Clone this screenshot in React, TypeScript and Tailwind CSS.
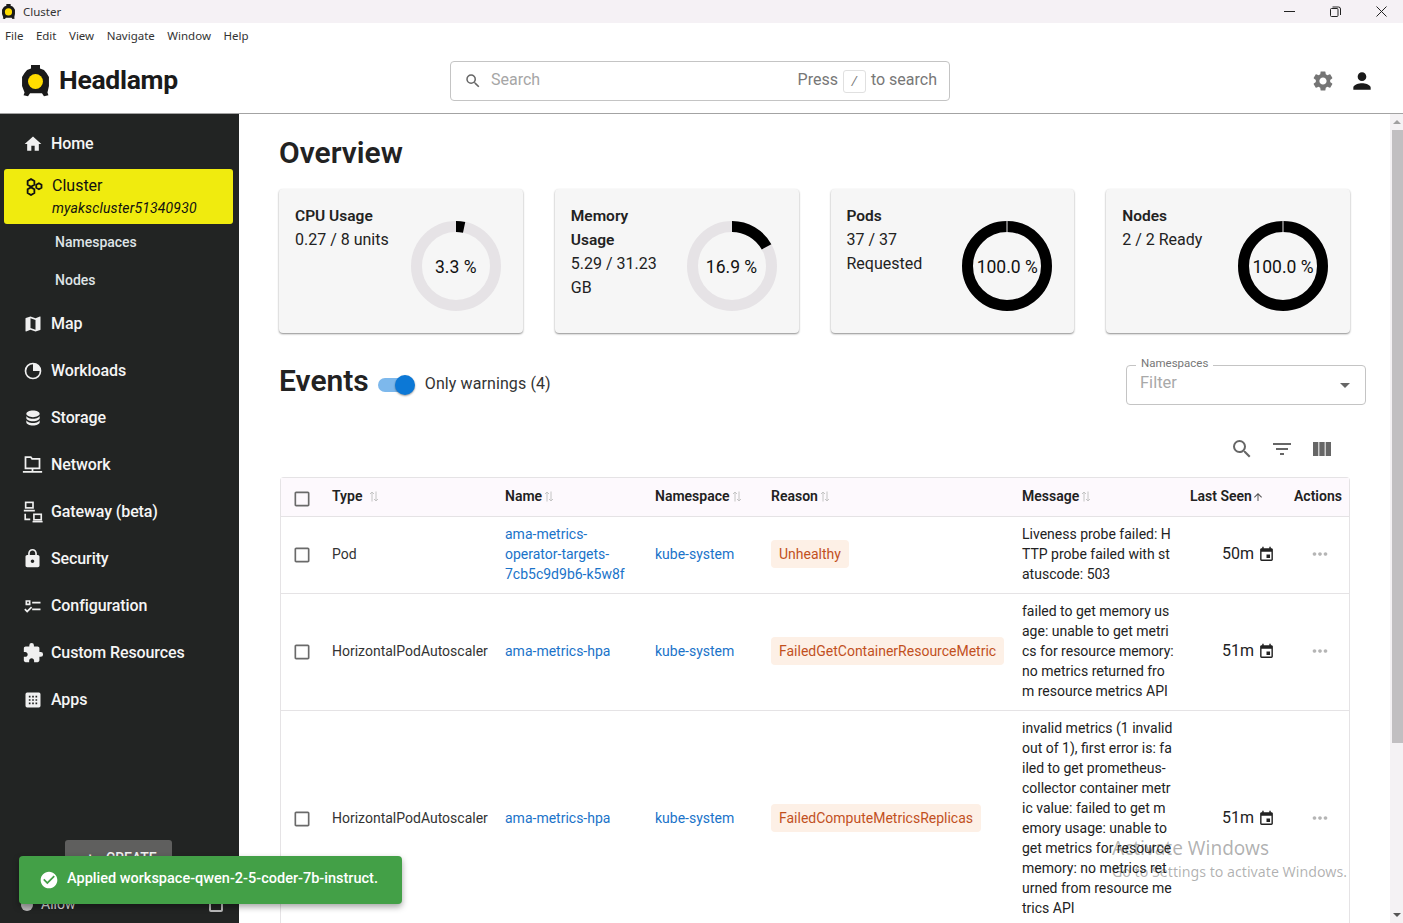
import {
  MdArrowUpward,
  MdCheckBoxOutlineBlank,
  MdCheckCircle,
  MdEvent,
  MdExtension,
  MdFilterList,
  MdHome,
  MdLock,
  MdMap,
  MdMoreHoriz,
  MdPerson,
  MdSearch,
  MdSettings,
  MdViewColumn,
} from "react-icons/md";
import { ReactNode } from "react";

const FONT = "font-['Roboto','Noto_Sans',sans-serif]";

const Logo = ({ size }: { size: number }) => (
  <svg width={size} height={size * 1.18} viewBox="0 0 27 32">
    <path
      d="M9 0h9v3.500l4 1.500 2.500 3L27 12v9l-1.500 6.500 1 3-4.500 1-2-3H8l-2 3-4.500-1 1-3L0 21v-9l2.500-4L5 5l4-1.500z"
      fill="#1a1a1a"
    />
    <circle cx="13.5" cy="16.5" r="7.5" fill="#ffdc00" />
  </svg>
);

const WorkloadsIcon = () => (
  <svg width="20" height="20" viewBox="0 0 24 24" fill="#f0f0f0">
    <path d="M12 2A10 10 0 1 0 22 12 10 10 0 0 0 12 2m0 18a8 8 0 1 1 0-16v8h8a8 8 0 0 1-8 8" />
  </svg>
);

const StorageIcon = () => (
  <svg width="20" height="20" viewBox="0 0 24 24" fill="#f0f0f0">
    <path d="M12 3C7.58 3 4 4.790 4 7s3.580 4 8 4 8-1.790 8-4-3.580-4-8-4M4 9v3c0 2.210 3.580 4 8 4s8-1.790 8-4V9c0 2.210-3.580 4-8 4s-8-1.790-8-4m0 5v3c0 2.210 3.580 4 8 4s8-1.790 8-4v-3c0 2.210-3.580 4-8 4s-8-1.790-8-4" />
  </svg>
);

const NetworkIcon = () => (
  <svg width="21" height="21" viewBox="0 0 24 24" fill="none" stroke="#f0f0f0" strokeWidth="2">
    <path d="M4 3.500h6l1.500 2H20v11H4z" />
    <path d="M12 16.500v4M1 20.500h22" />
  </svg>
);

const GatewayIcon = () => (
  <svg width="22" height="22" viewBox="0 0 24 24" fill="none" stroke="#f0f0f0" strokeWidth="1.800">
    <rect x="4" y="1.500" width="8" height="6" />
    <path d="M2 10.500h12M3.500 14v6H9" />
    <rect x="13" y="14.500" width="8" height="6" />
    <path d="M11.500 22.500h11" />
  </svg>
);

const ConfigIcon = () => (
  <svg width="20" height="20" viewBox="0 0 24 24" fill="#f0f0f0">
    <path d="M3 5h6v6H3zm2 2v2h2V7zm6 0h10v2H11zm0 8h10v2H11zm-6 5-3.500-3.500 1.410-1.410L5 17.170l4.590-4.580L11 14z" />
  </svg>
);

const AppsIcon = () => (
  <svg width="20" height="20" viewBox="0 0 24 24" fill="#f0f0f0">
    <path d="M5 3h14a2 2 0 0 1 2 2v14a2 2 0 0 1-2 2H5a2 2 0 0 1-2-2V5a2 2 0 0 1 2-2m2 4v2h2V7zm4 0v2h2V7zm4 0v2h2V7zm-8 4v2h2v-2zm4 0v2h2v-2zm4 0v2h2v-2zm-8 4v2h2v-2zm4 0v2h2v-2zm4 0v2h2v-2z" />
  </svg>
);

const ClusterIcon = () => (
  <svg width="18" height="18" viewBox="0 0 24 24" fill="none" stroke="#111" strokeWidth="2.400">
    <path d="M8 1.500l4.500 2.600v5L8 11.700 3.500 9.100v-5z" />
    <path d="M8 12.500l4.500 2.600v5L8 22.700l-4.500-2.600v-5z" />
    <path d="M18.500 7l3.500 2v4l-3.500 2-3.500-2V9z" />
  </svg>
);

const NavItem = ({ icon, label }: { icon: ReactNode; label: string }) => (
  <div className="flex h-[47px] items-center text-[16px] font-medium text-[#f5f5f5]">
    <div className="flex w-[51px] shrink-0 justify-center pl-[16px] pr-[2px]">{icon}</div>
    <span className="tracking-[-0.1px]">{label}</span>
  </div>
);

const SubItem = ({ label }: { label: string }) => (
  <div className="flex h-[38px] items-center pb-[2px] pl-[55px] text-[14px] font-medium text-[#dfe3e6]">
    {label}
  </div>
);

const Sidebar = () => (
  <aside className="flex w-[239px] shrink-0 flex-col bg-[#222423] pt-[6px]">
    <NavItem icon={<MdHome size={20} color="#f0f0f0" />} label="Home" />
    <div className="mt-[2px] mr-[6px] ml-[4px] flex h-[55px] rounded-[3px] bg-[#f0eb0e] text-[#111]">
      <div className="flex w-[43px] shrink-0 justify-end pt-[9px] pr-[4px]">
        <ClusterIcon />
      </div>
      <div className="pl-[5px]">
        <div className="mt-[6px] text-[16px] leading-[22px]">Cluster</div>
        <div className="text-[14px] leading-[22px] tracking-[0.15px] italic">myakscluster51340930</div>
      </div>
    </div>
    <SubItem label="Namespaces" />
    <SubItem label="Nodes" />
    <NavItem icon={<MdMap size={20} color="#f0f0f0" />} label="Map" />
    <NavItem icon={<WorkloadsIcon />} label="Workloads" />
    <NavItem icon={<StorageIcon />} label="Storage" />
    <NavItem icon={<NetworkIcon />} label="Network" />
    <NavItem icon={<GatewayIcon />} label="Gateway (beta)" />
    <NavItem icon={<MdLock size={21} color="#f0f0f0" />} label="Security" />
    <NavItem icon={<ConfigIcon />} label="Configuration" />
    <NavItem icon={<MdExtension size={22} color="#f0f0f0" />} label="Custom Resources" />
    <NavItem icon={<AppsIcon />} label="Apps" />
    <div className="mt-auto ml-[65px] flex h-[36px] w-[107px] items-center justify-center gap-[12px] rounded-[3px] bg-[#5f5f5e] pl-[6px] text-[14px] font-medium text-[#f0f0f0]">
      <span>+</span>
      <span>CREATE</span>
    </div>
    <div className="flex h-[47px] items-center pt-[10px] pr-[16px] pl-[21px] text-[14px] text-[#ddd]">
      <span className="h-[12px] w-[12px] rounded-full bg-[#bbb]" />
      <span className="ml-[8px]">Allow</span>
      <span className="ml-auto h-[14px] w-[14px] rounded-[2px] border-2 border-[#bbb]" />
    </div>
  </aside>
);

const Donut = ({ pct }: { pct: number }) => {
  const r = 39.5;
  const c = 2 * Math.PI * r;
  const full = pct >= 100;
  return (
    <div className="grid h-[92px] w-[92px] shrink-0 place-items-center">
      <svg className="col-start-1 row-start-1" width="92" height="92" viewBox="0 0 92 92">
        <circle cx="46" cy="46" r={r} fill="none" stroke="#e6e3e6" strokeWidth="11" />
        <circle
          cx="46"
          cy="46"
          r={r}
          fill="none"
          stroke="#000"
          strokeWidth="11"
          strokeDasharray={`${(pct / 100) * c} ${c}`}
          transform="rotate(-90 46 46)"
        />
        {full && <rect x="45.500" y="0.500" width="1" height="12" fill="#e6e3e6" />}
      </svg>
      <span className="col-start-1 row-start-1 pt-[2px] text-[17.500px] whitespace-nowrap text-[#111]">
        {pct.toFixed(1)} %
      </span>
    </div>
  );
};

const Card = ({ title, lines, pct }: { title: string[]; lines: string[]; pct: number }) => (
  <div className="flex h-[144px] w-[243.750px] justify-between rounded-[4px] bg-[#f6f6f6] pt-[15px] pr-[21px] pl-[16px] shadow-[0_1px_2px_rgba(0,0,0,0.45)]">
    <div className="text-[16px] leading-[24px] text-[#222]">
      {title.map((t) => (
        <div key={t} className="text-[15.500px] font-semibold">
          {t}
        </div>
      ))}
      {lines.map((l) => (
        <div key={l}>{l}</div>
      ))}
    </div>
    <div className="mt-[16px]">
      <Donut pct={pct} />
    </div>
  </div>
);

const SortArrows = () => (
  <svg width="10" height="11" viewBox="0 0 10 11" fill="none" stroke="#c4c4c4" strokeWidth="1">
    <path d="M3 10.500V1M1 3l2-2 2 2" />
    <path d="M7 .5V10M5 8l2 2 2-2" />
  </svg>
);

const COLS = "grid grid-cols-[51px_173px_150px_116px_251px_168px_104px_56px]";

const HeadCell = ({ label, gap = 2 }: { label: string; gap?: number }) => (
  <div className="flex items-center pb-[1px] font-semibold text-[#222]">
    <span>{label}</span>
    <span style={{ marginLeft: gap }}>
      <SortArrows />
    </span>
  </div>
);

const Row = ({
  type,
  name,
  reason,
  message,
  seen,
  border,
}: {
  type: string;
  name: string[];
  reason: string;
  message: string[];
  seen: string;
  border: boolean;
}) => (
  <div className={`${COLS} items-center pt-[7px] pb-[9px] text-[14px] leading-[20px] ${border ? "border-b border-[#e5e3e5]" : ""}`}>
    <div className="flex justify-center pt-[2px] pr-[9px]">
      <MdCheckBoxOutlineBlank size={20} color="#6a6a6a" />
    </div>
    <div className="text-[#333]">{type}</div>
    <div className="text-[#1a73c9]">
      {name.map((n) => (
        <div key={n}>{n}</div>
      ))}
    </div>
    <div className="text-[#1a73c9]">kube-system</div>
    <div>
      <span className="inline-block rounded-[4px] bg-[#fdf0e6] px-[8px] py-[4px] text-[#c2501e]">{reason}</span>
    </div>
    <div className="whitespace-nowrap text-[#222]">
      {message.map((m) => (
        <div key={m}>{m}</div>
      ))}
    </div>
    <div className="flex items-center justify-end gap-[4px] pr-[19px] text-[16px] text-[#222]">
      <span>{seen}</span>
      <MdEvent size={17} color="#222" />
    </div>
    <div className="flex pl-[15px]">
      <MdMoreHoriz size={22} color="#b5b5b5" />
    </div>
  </div>
);

const TitleBar = () => (
  <div className="flex h-[23px] shrink-0 items-center bg-[#f5f1f5] pl-[2px] font-['Noto_Sans',sans-serif] text-[11.500px] text-[#333]">
    <Logo size={13} />
    <span className="ml-[8px]">Cluster</span>
    <div className="ml-auto flex items-center gap-[35px] pr-[16px]">
      <svg width="11" height="11" viewBox="0 0 11 11" stroke="#222" fill="none">
        <path d="M0 5.500h11" />
      </svg>
      <svg width="11" height="11" viewBox="0 0 11 11" stroke="#222" fill="none">
        <rect x="0.500" y="2.500" width="7.500" height="8" rx="1" />
        <path d="M2.500 1h6a2 2 0 0 1 2 2v6" />
      </svg>
      <svg width="11" height="11" viewBox="0 0 11 11" stroke="#222" fill="none">
        <path d="M.5.5l10 10M10.500.5l-10 10" />
      </svg>
    </div>
  </div>
);

const MenuBar = () => (
  <div className="flex h-[26px] shrink-0 items-center gap-[12.500px] pl-[5px] font-['Noto_Sans',sans-serif] text-[11.500px] text-[#333]">
    {["File", "Edit", "View", "Navigate", "Window", "Help"].map((m) => (
      <span key={m}>{m}</span>
    ))}
  </div>
);

const Header = () => (
  <header className="flex h-[65px] shrink-0 items-center border-b border-[#a3a3a3] pr-[28px] pl-[22px]">
    <Logo size={27} />
    <span className="ml-[10px] w-[391px] pb-[2px] text-[26.500px] font-bold tracking-[-0.3px] text-[#1a1a1a]">Headlamp</span>
    <div className="flex h-[40px] w-[500px] items-center rounded-[4px] border border-[#c4c4c4] pr-[12px] pl-[13px] text-[16px] text-[#8a8a8a]">
      <MdSearch size={18} color="#666" />
      <span className="ml-[9px] pb-[2px] text-[#a6a6a6]">Search</span>
      <span className="ml-auto pb-[2px] text-[#777]">Press</span>
      <span className="mx-[5px] flex h-[23px] w-[23px] items-center justify-center rounded-[3px] border border-[#e0e0e0] text-[13px] text-[#777] italic">
        /
      </span>
      <span className="pb-[2px] text-[#777]">to search</span>
    </div>
    <div className="ml-auto flex items-center gap-[14px]">
      <MdSettings size={24} color="#757575" />
      <MdPerson size={26} color="#1a1a1a" />
    </div>
  </header>
);

const Events = () => (
  <>
    <div className="flex h-[40px] items-center pr-[24px]">
      <h2 className="pb-[10px] text-[30px] font-semibold text-[#222]">Events</h2>
      <div className="relative ml-[9px] h-[14px] w-[34px] rounded-full bg-[#7db8ec]">
        <div className="absolute top-[-3px] right-[-3px] h-[20px] w-[20px] rounded-full bg-[#0c78d6] shadow-[0_1px_2px_rgba(0,0,0,0.4)]" />
      </div>
      <span className="ml-[13px] pb-[2px] text-[16px] tracking-[0.1px] text-[#333]">Only warnings (4)</span>
      <div className="relative ml-auto flex h-[40px] w-[240px] items-center justify-between rounded-[4px] border border-[#c4c4c4] pr-[15px] pl-[13px] text-[16.500px] text-[#a9a9a9]">
        <span className="absolute top-[-10px] left-[9px] bg-white px-[5px] text-[11.500px] leading-[14px] text-[#777]">
          Namespaces
        </span>
        <span className="-mt-[4px]">Filter</span>
        <span className="h-0 w-0 border-x-[5px] border-t-[5px] border-x-transparent border-t-[#666]" />
      </div>
    </div>
    <div className="mt-[26px] mb-[10px] flex h-[36px] items-center justify-end gap-[16px] pr-[56px]">
      <MdSearch size={24} color="#666" />
      <MdFilterList size={24} color="#666" />
      <MdViewColumn size={24} color="#666" />
    </div>
  </>
);

const EventsTable = () => (
  <div className="mr-[40px] ml-[1px] rounded-t-[4px] border border-b-0 border-[#e5e3e5]">
    <div className={`${COLS} h-[39px] items-center border-b border-[#e5e3e5] bg-[#fdf9fd] text-[14px]`}>
      <div className="flex justify-center pt-[4px] pr-[9px]">
        <MdCheckBoxOutlineBlank size={20} color="#6a6a6a" />
      </div>
      <HeadCell label="Type" gap={7} />
      <HeadCell label="Name" />
      <HeadCell label="Namespace" />
      <HeadCell label="Reason" />
      <HeadCell label="Message" />
      <div className="flex items-center pb-[1px] font-semibold text-[#222]">
        <span>Last Seen</span>
        <MdArrowUpward size={12} color="#555" />
      </div>
      <div className="pb-[1px] font-semibold text-[#222]">Actions</div>
    </div>
    <Row
      border
      type="Pod"
      name={["ama-metrics-", "operator-targets-", "7cb5c9d9b6-k5w8f"]}
      reason="Unhealthy"
      message={["Liveness probe failed: H", "TTP probe failed with st", "atuscode: 503"]}
      seen="50m"
    />
    <Row
      border
      type="HorizontalPodAutoscaler"
      name={["ama-metrics-hpa"]}
      reason="FailedGetContainerResourceMetric"
      message={[
        "failed to get memory us",
        "age: unable to get metri",
        "cs for resource memory:",
        "no metrics returned fro",
        "m resource metrics API",
      ]}
      seen="51m"
    />
    <Row
      border={false}
      type="HorizontalPodAutoscaler"
      name={["ama-metrics-hpa"]}
      reason="FailedComputeMetricsReplicas"
      message={[
        "invalid metrics (1 invalid",
        "out of 1), first error is: fa",
        "iled to get prometheus-",
        "collector container metr",
        "ic value: failed to get m",
        "emory usage: unable to",
        "get metrics for resource",
        "memory: no metrics ret",
        "urned from resource me",
        "trics API",
      ]}
      seen="51m"
    />
  </div>
);

const Scrollbar = () => (
  <div className="flex w-[13px] shrink-0 flex-col bg-[#f4f2f4]">
    <div className="flex h-[16px] items-center justify-center">
      <span className="h-0 w-0 border-x-[4px] border-b-[4px] border-x-transparent border-b-[#a0a0a0]" />
    </div>
    <div className="ml-[2px] h-[613px] bg-[#c1bfc1]" />
    <div className="mt-auto flex h-[16px] items-center justify-center">
      <span className="h-0 w-0 border-x-[4px] border-t-[4px] border-x-transparent border-t-[#555]" />
    </div>
  </div>
);

export default function App() {
  return (
    <div className={`relative flex h-screen flex-col overflow-hidden bg-white ${FONT}`}>
      <TitleBar />
      <MenuBar />
      <Header />
      <div className="flex min-h-0 flex-1">
        <Sidebar />
        <main className="min-w-0 flex-1 overflow-hidden pt-[19px] pl-[40px]">
          <h1 className="h-[40px] text-[30px] leading-[40px] font-semibold text-[#222]">Overview</h1>
          <div className="mt-[16px] mb-[32px] flex gap-[32px]">
            <Card title={["CPU Usage"]} lines={["0.27 / 8 units"]} pct={3.3} />
            <Card title={["Memory", "Usage"]} lines={["5.29 / 31.23", "GB"]} pct={16.9} />
            <Card title={["Pods"]} lines={["37 / 37", "Requested"]} pct={100} />
            <Card title={["Nodes"]} lines={["2 / 2 Ready"]} pct={100} />
          </div>
          <Events />
          <EventsTable />
        </main>
        <Scrollbar />
      </div>

      <div className="absolute top-[856px] left-[19px] flex h-[48px] w-[383px] items-center rounded-[4px] bg-[#43a047] pl-[20px] text-[14.500px] font-medium text-white shadow-[0_3px_6px_rgba(0,0,0,0.35)]">
        <MdCheckCircle size={20} color="#fff" />
        <span className="ml-[8px] pb-[2px]">Applied workspace-qwen-2-5-coder-7b-instruct.</span>
      </div>

      <div className="pointer-events-none absolute top-[835px] left-[1112px] font-['Noto_Sans',sans-serif] text-[#1a1a1a]/35">
        <div className="text-[19px] leading-[26px]">Activate Windows</div>
        <div className="text-[14.200px] leading-[22px]">Go to Settings to activate Windows.</div>
      </div>
    </div>
  );
}
